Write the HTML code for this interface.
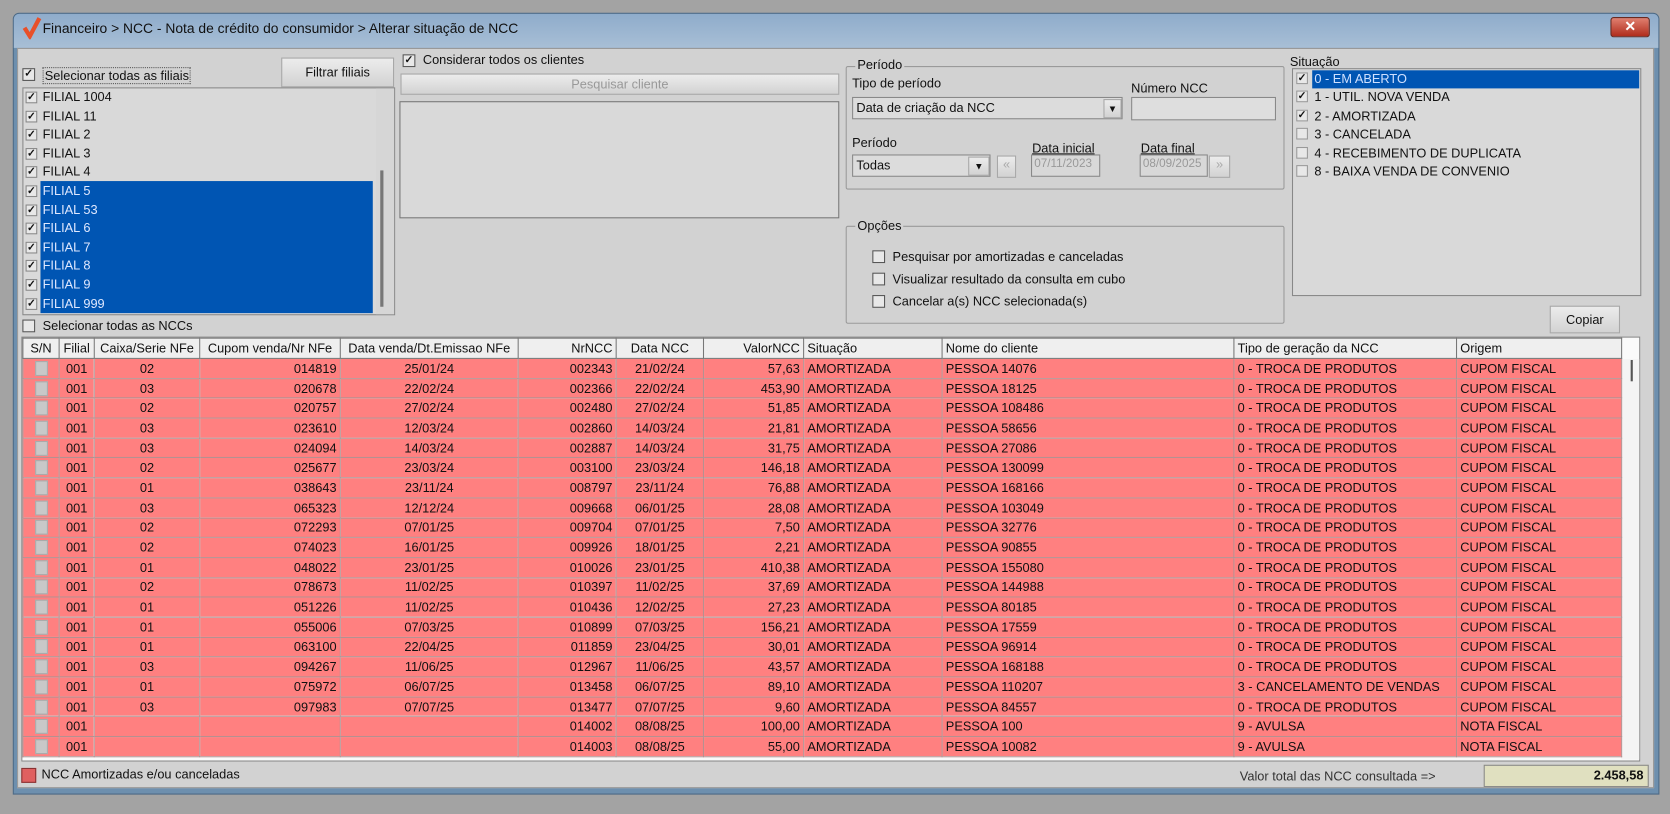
<!DOCTYPE html>
<html><head><meta charset="utf-8"><style>
*{box-sizing:border-box;margin:0;padding:0}
body{width:1670px;height:814px;background:#a3a3a3;font-family:"Liberation Sans",sans-serif;font-size:12px;color:#111;position:relative;overflow:hidden}
#w{position:absolute;left:0;top:0;width:1568px;height:764px;transform:scale(1.0651);transform-origin:0 0}
.a{position:absolute}
.win{left:12px;top:12px;width:1546px;height:734px;background:#6d8fae;border:1px solid #4d6a86;border-radius:6px 6px 0 0}
.title{left:13px;top:13px;width:1544px;height:32px;background:linear-gradient(#8faccb,#a8bfd6);border-radius:5px 5px 0 0}
.body{left:16px;top:45px;width:1537px;height:695px;background:#d2d2d2;border:1px solid #999}
.cb{position:absolute;width:12px;height:12px;border:1px solid #555;background:#e8e8e8;font-size:10px;line-height:10px;text-align:center;font-weight:bold}
.lbl{position:absolute;white-space:nowrap}
.box{position:absolute;border:1px solid #888;background:#d9d9d9}
.grp{position:absolute;border:1px solid #9a9a9a;border-radius:2px}
.btn{position:absolute;background:linear-gradient(#ececec,#d2d2d2);border:1px solid #a8a8a8;text-align:center}
table{border-collapse:collapse;table-layout:fixed}
td{height:18.7px;border:1px solid #b69090;padding:0 3px;white-space:nowrap;overflow:hidden;font-size:12px;line-height:16px}
th{height:19px;border:1px solid #777;background:#efefef;font-weight:normal;padding:0 3px;white-space:nowrap;overflow:hidden;font-size:12px}
tr.r td{background:#ff8080}
.r td:nth-child(1){padding:0 6px}
.c{text-align:center}.rt{text-align:right}.l{text-align:left}
.sq{display:block;width:12px;height:14px;background:#c8c8c8;border:1px solid #aaa;margin:auto}
</style></head><body><div id="w">
<div class="a win"></div>
<div class="a title"></div>
<svg class="a" style="left:20px;top:15px" width="20" height="22"><path d="M3 11 L8 19 L17 2" stroke="#e8502a" stroke-width="4" fill="none"/></svg>
<div class="lbl" style="left:40px;top:19px;font-size:13px;color:#111">Financeiro &gt; NCC - Nota de crédito do consumidor &gt; Alterar situação de NCC</div>
<div class="a" style="left:1512px;top:16px;width:37px;height:19px;background:linear-gradient(#e08070,#b02c1c);border:1px solid #6a2a20;border-radius:3px;color:#fff;text-align:center;font-weight:bold;font-size:13px;line-height:16px">✕</div>
<div class="a body"></div>

<!-- filiais -->
<div class="cb" style="left:21px;top:64px">✓</div>
<div class="lbl" style="left:40px;top:63px;border:1px dotted #555;padding:0 1px">Selecionar todas as filiais</div>
<div class="btn" style="left:264px;top:54px;width:106px;height:28px;line-height:26px">Filtrar filiais</div>
<div class="box" style="left:21px;top:82px;width:350px;height:214px;background:#d9d9d9"></div>
<div class="a" style="left:353px;top:83px;width:17px;height:212px;background:#d6d6d6"></div>
<div class="a" style="left:357px;top:160px;width:3px;height:128px;background:#777"></div>
<div class="a" style="left:38px;top:170px;width:312px;height:124px;background:#0055b3"></div>
<div id="fl"></div>

<!-- clientes -->
<div class="cb" style="left:378px;top:51px">✓</div>
<div class="lbl" style="left:397px;top:49px">Considerar todos os clientes</div>
<div class="btn" style="left:376px;top:69px;width:412px;height:20px;line-height:18px;color:#999">Pesquisar cliente</div>
<div class="box" style="left:375px;top:95px;width:413px;height:110px;border-color:#777"></div>

<!-- periodo -->
<div class="grp" style="left:794px;top:62px;width:412px;height:116px"></div>
<div class="lbl" style="left:803px;top:54px;background:#d2d2d2;padding:0 2px">Período</div>
<div class="lbl" style="left:800px;top:71px">Tipo de período</div>
<div class="box" style="left:800px;top:91px;width:254px;height:21px;padding:2px 3px;background:#dcdcdc">Data de criação da NCC</div>
<div class="btn" style="left:1036px;top:93px;width:17px;height:18px;font-size:9px;line-height:16px">▼</div>
<div class="lbl" style="left:1062px;top:76px">Número NCC</div>
<div class="box" style="left:1062px;top:91px;width:136px;height:22px;background:#dedede"></div>
<div class="lbl" style="left:800px;top:127px">Período</div>
<div class="box" style="left:800px;top:145px;width:130px;height:21px;padding:2px 3px;background:#dcdcdc">Todas</div>
<div class="btn" style="left:909px;top:147px;width:20px;height:18px;font-size:9px;line-height:16px">▼</div>
<div class="btn" style="left:936px;top:146px;width:18px;height:21px;color:#aaa">«</div>
<div class="lbl" style="left:969px;top:132px;text-decoration:underline">Data inicial</div>
<div class="box" style="left:968px;top:145px;width:65px;height:21px;color:#999;padding:2px;background:#d8d8d8;font-size:11px">07/11/2023</div>
<div class="lbl" style="left:1071px;top:132px;text-decoration:underline">Data final</div>
<div class="box" style="left:1070px;top:145px;width:64px;height:21px;color:#999;padding:2px;background:#d8d8d8;font-size:11px">08/09/2025</div>
<div class="btn" style="left:1135px;top:146px;width:20px;height:21px;color:#aaa">»</div>

<!-- opcoes -->
<div class="grp" style="left:794px;top:212px;width:412px;height:92px"></div>
<div class="lbl" style="left:803px;top:205px;background:#d2d2d2;padding:0 2px">Opções</div>
<div class="cb" style="left:819px;top:235px"></div><div class="lbl" style="left:838px;top:234px">Pesquisar por amortizadas e canceladas</div>
<div class="cb" style="left:819px;top:256px"></div><div class="lbl" style="left:838px;top:255px">Visualizar resultado da consulta em cubo</div>
<div class="cb" style="left:819px;top:277px"></div><div class="lbl" style="left:838px;top:276px">Cancelar a(s) NCC selecionada(s)</div>

<!-- situacao -->
<div class="lbl" style="left:1211px;top:51px">Situação</div>
<div class="box" style="left:1213px;top:64px;width:328px;height:214px"></div>
<div class="a" style="left:1232px;top:66px;width:307px;height:17px;background:#0055b3"></div>
<div id="sit"></div>
<div class="btn" style="left:1455px;top:287px;width:66px;height:26px;line-height:24px">Copiar</div>

<div class="cb" style="left:21px;top:300px"></div>
<div class="lbl" style="left:40px;top:299px">Selecionar todas as NCCs</div>

<!-- table -->
<div class="a" style="left:20px;top:316px;width:1520px;height:399px;background:#fafafa;border:1px solid #888"></div>
<div class="a" style="left:1522px;top:337px;width:17px;height:376px;background:#f4f4f4"></div>
<div class="a" style="left:1531px;top:338px;width:2px;height:20px;background:#555"></div>
<table class="a" style="left:21px;top:317px;width:1501px" id="t">
<colgroup><col style="width:34px"><col style="width:33px"><col style="width:99px"><col style="width:132px"><col style="width:167px"><col style="width:92px"><col style="width:82px"><col style="width:94px"><col style="width:130px"><col style="width:274px"><col style="width:209px"><col style="width:155px"></colgroup>
<tr><th>S/N</th><th>Filial</th><th>Caixa/Serie NFe</th><th>Cupom venda/Nr NFe</th><th>Data venda/Dt.Emissao NFe</th><th class="rt">NrNCC</th><th>Data NCC</th><th class="rt">ValorNCC</th><th class="l">Situação</th><th class="l">Nome do cliente</th><th class="l">Tipo de geração da NCC</th><th class="l">Origem</th></tr>
</table>

<div class="a" style="left:20px;top:721px;width:14px;height:14px;background:#e06060;border:1px solid #833"></div>
<div class="lbl" style="left:39px;top:720px">NCC Amortizadas e/ou canceladas</div>
<div class="lbl" style="left:1164px;top:722px;color:#333">Valor total das NCC consultada =&gt;</div>
<div class="a" style="left:1393px;top:718px;width:155px;height:21px;background:#e0e0c0;border:1px solid #888;text-align:right;padding:2px 4px;font-weight:bold">2.458,58</div>
</div>
<script>
var f=["FILIAL 1004","FILIAL 11","FILIAL 2","FILIAL 3","FILIAL 4","FILIAL 5","FILIAL 53","FILIAL 6","FILIAL 7","FILIAL 8","FILIAL 9","FILIAL 999"],h="";
f.forEach(function(n,i){var y=83+i*17.6;h+='<div class="cb" style="left:24px;top:'+(y+3)+'px;width:11px;height:11px;border-color:#888">✓</div><div class="lbl" style="left:40px;top:'+(y+1)+'px;color:'+(i>4?'#dfe8ff':'#111')+'">'+n+'</div>'});
document.getElementById('fl').innerHTML=h;
var s=[["0 - EM ABERTO",1],["1 - UTIL. NOVA VENDA",1],["2 - AMORTIZADA",1],["3 - CANCELADA",0],["4 - RECEBIMENTO DE DUPLICATA",0],["8 - BAIXA VENDA DE CONVENIO",0]];h="";
s.forEach(function(n,i){var y=66+i*17.4;h+='<div class="cb" style="left:1217px;top:'+(y+2)+'px;width:11px;height:11px;border-color:#999">'+(n[1]?'✓':'')+'</div><div class="lbl" style="left:1234px;top:'+(y+1)+'px;color:'+(i==0?'#cfe0ff':'#111')+'">'+n[0]+'</div>'});
document.getElementById('sit').innerHTML=h;
var R=[["02","014819","25/01/24","002343","21/02/24","57,63","14076"],["03","020678","22/02/24","002366","22/02/24","453,90","18125"],["02","020757","27/02/24","002480","27/02/24","51,85","108486"],["03","023610","12/03/24","002860","14/03/24","21,81","58656"],["03","024094","14/03/24","002887","14/03/24","31,75","27086"],["02","025677","23/03/24","003100","23/03/24","146,18","130099"],["01","038643","23/11/24","008797","23/11/24","76,88","168166"],["03","065323","12/12/24","009668","06/01/25","28,08","103049"],["02","072293","07/01/25","009704","07/01/25","7,50","32776"],["02","074023","16/01/25","009926","18/01/25","2,21","90855"],["01","048022","23/01/25","010026","23/01/25","410,38","155080"],["02","078673","11/02/25","010397","11/02/25","37,69","144988"],["01","051226","11/02/25","010436","12/02/25","27,23","80185"],["01","055006","07/03/25","010899","07/03/25","156,21","17559"],["01","063100","22/04/25","011859","23/04/25","30,01","96914"],["03","094267","11/06/25","012967","11/06/25","43,57","168188"],["01","075972","06/07/25","013458","06/07/25","89,10","110207"],["03","097983","07/07/25","013477","07/07/25","9,60","84557"],["","","","014002","08/08/25","100,00","100"],["","","","014003","08/08/25","55,00","10082"]];
var t=document.getElementById('t');h="";
R.forEach(function(r,i){var tp=i==16?"3 - CANCELAMENTO DE VENDAS":(i>17?"9 - AVULSA":"0 - TROCA DE PRODUTOS"),o=i>17?"NOTA FISCAL":"CUPOM FISCAL";
h+='<tr class="r"><td><span class="sq"></span></td><td class="c">001</td><td class="c">'+r[0]+'</td><td class="rt">'+r[1]+'</td><td class="c">'+r[2]+'</td><td class="rt">'+r[3]+'</td><td class="c">'+r[4]+'</td><td class="rt">'+r[5]+'</td><td>AMORTIZADA</td><td>PESSOA '+r[6]+'</td><td>'+tp+'</td><td>'+o+'</td></tr>'});
t.insertAdjacentHTML('beforeend',h);
</script>
</body></html>
